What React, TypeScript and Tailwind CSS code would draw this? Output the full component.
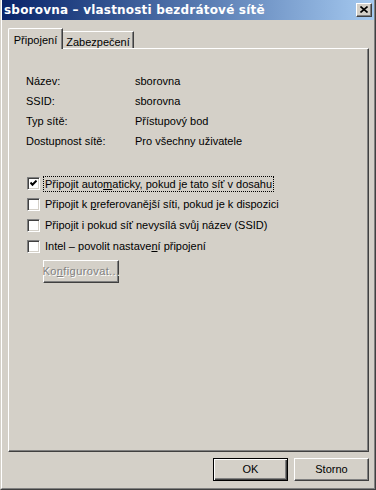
const font = { fontFamily: '"Liberation Sans", Arial, sans-serif' };
const titleFont = { fontFamily: '"DejaVu Sans", Verdana, sans-serif' };

function CloseButton() {
  return (
    <div className="flex h-[14px] w-[16px] items-center justify-center border-t border-l border-white border-r border-b border-r-[#404040] border-b-[#404040] bg-[#D4D0C8] shadow-[inset_-1px_-1px_#808080]">
      <svg width="8" height="7" viewBox="0 0 8 7" className="mb-[1px]">
        <path d="M0.5 0.5 L7.5 6.5 M7.5 0.5 L0.5 6.5" stroke="#000" strokeWidth="1.6" />
      </svg>
    </div>
  );
}

function Checkbox({ checked }: { checked?: boolean }) {
  return (
    <div className="flex h-[13px] w-[13px] shrink-0 items-center justify-center border-t border-l border-[#808080] border-r border-b border-r-white border-b-white bg-white shadow-[inset_1px_1px_#404040,inset_-1px_-1px_#D4D0C8]">
      {checked && (
        <svg width="7" height="7" viewBox="0 0 7 7">
          <path d="M0.5 2.5 L2.5 4.8 L6.5 0.6" stroke="#000" strokeWidth="2" fill="none" />
        </svg>
      )}
    </div>
  );
}

function Button({ label, isDefault }: { label: string; isDefault?: boolean }) {
  if (isDefault) {
    return (
      <div className="flex h-[23px] w-[75px] items-center justify-center border border-black bg-[#D4D0C8] text-[11px] text-black shadow-[inset_1px_1px_white,inset_-1px_-1px_#404040,inset_-2px_-2px_#808080]">
        {label}
      </div>
    );
  }
  return (
    <div className="flex h-[23px] w-[75px] items-center justify-center border-t border-l border-white border-r border-b border-r-[#404040] border-b-[#404040] bg-[#D4D0C8] text-[11px] text-black shadow-[inset_-1px_-1px_#808080]">
      {label}
    </div>
  );
}

const info = [
  ["Název:", "sborovna"],
  ["SSID:", "sborovna"],
  ["Typ sítě:", "Přístupový bod"],
  ["Dostupnost sítě:", "Pro všechny uživatele"],
];

export default function App() {
  return (
    <div
      className="flex h-[490px] w-[376px] border-l border-[#D4D0C8] border-r border-b border-r-[#404040] border-b-[#404040] bg-[#D4D0C8]"
      style={font}
    >
      <div className="flex flex-1 flex-col border-l border-white border-r border-b border-r-[#808080] border-b-[#808080]">
        <div className="flex h-[20px] items-center justify-between bg-gradient-to-r from-[#0A246A] to-[#A6CAF0] pl-[2px] pr-[2px]">
          <span className="text-[12px] font-bold tracking-[0.2px] text-white" style={titleFont}>
            sborovna – vlastnosti bezdrátové sítě
          </span>
          <CloseButton />
        </div>

        <div className="ml-[6px] mt-[8px] flex h-[20px] items-end">
          <div className="relative z-10 -mb-[1px] flex h-[21px] w-[55px] items-start justify-center rounded-tl-[2px] border-t border-l border-white border-r border-r-[#404040] bg-[#D4D0C8] pt-[3px] text-[11px] text-black shadow-[inset_-1px_0_#808080]">
            Připojení
          </div>
          <div className="flex h-[17px] w-[71px] items-start justify-center border-t border-white border-r border-r-[#404040] pt-[2px] text-[11px] text-black shadow-[inset_-1px_0_#808080]">
            Zabezpečení
          </div>
        </div>

        <div className="ml-[6px] h-[404px] w-[361px] border-t border-l border-white border-r border-b border-r-[#404040] border-b-[#404040] pl-[17px] pt-[22px] shadow-[inset_-1px_-1px_#808080]">
          <div className="flex flex-col">
            {info.map(([k, v]) => (
              <div key={k} className="flex h-[20px] items-center text-[11px] text-black">
                <span className="w-[109px]">{k}</span>
                <span>{v}</span>
              </div>
            ))}
          </div>

          <div className="mt-[22px] flex flex-col text-[11px] text-black">
            <div className="flex h-[21px] items-center pl-[1px]">
              <Checkbox checked />
              <span className="ml-[3px] border border-dotted border-black px-[1px] leading-[14px]">
                Připojit auto<u>m</u>aticky, pokud je tato síť v dosahu
              </span>
            </div>
            <div className="flex h-[21px] items-center pl-[1px]">
              <Checkbox />
              <span className="ml-[5px]">
                Připojit k <u>p</u>referovanější síti, pokud je k dispozici
              </span>
            </div>
            <div className="flex h-[21px] items-center pl-[1px]">
              <Checkbox />
              <span className="ml-[5px]">
                Připo<u>j</u>it i pokud síť nevysílá svůj název (SSID)
              </span>
            </div>
            <div className="flex h-[21px] items-center pl-[1px]">
              <Checkbox />
              <span className="ml-[5px]">
                Intel – povolit nastave<u>n</u>í připojení
              </span>
            </div>
          </div>

          <div className="ml-[17px] mt-[3px] flex h-[23px] w-[76px] items-center justify-center border-t border-l border-white border-r border-b border-r-[#404040] border-b-[#404040] text-[11px] tracking-[0.4px] text-[#808080] shadow-[inset_-1px_-1px_#808080] [text-shadow:1px_1px_0_#fff]">
            Ko<u>n</u>figurovat...
          </div>
        </div>

        <div className="mt-[6px] flex justify-end gap-[6px] pr-[5px]">
          <Button label="OK" isDefault />
          <Button label="Storno" />
        </div>
      </div>
    </div>
  );
}
